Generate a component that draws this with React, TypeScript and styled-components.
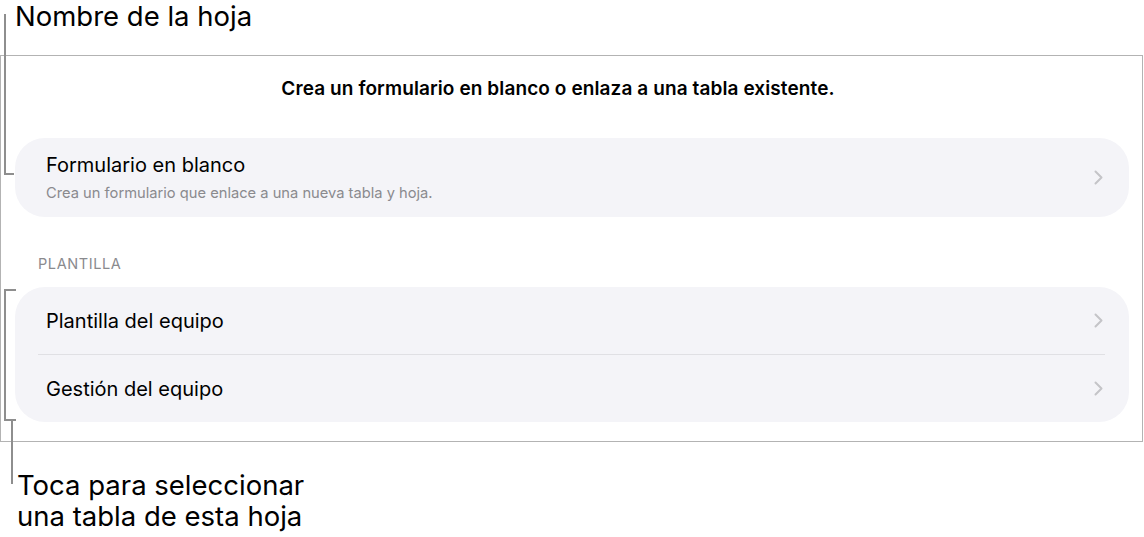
import React from 'react'
import styled, { createGlobalStyle } from 'styled-components'

const GlobalStyle = createGlobalStyle`
  html, body {
    margin: 0;
    padding: 0;
    background: #ffffff;
  }
  body {
    font-family: Inter, 'Noto Sans', sans-serif;
    color: #000000;
    -webkit-font-smoothing: antialiased;
  }
`

const colors = {
  line: '#8e8e8e',
  frame: '#b3b3b3',
  card: '#f4f4f8',
  divider: '#e0e0e4',
  muted: '#8a8a8e',
  chevron: '#c4c4c8',
}

const Page = styled.div`
  position: relative;
  width: 1144px;
  height: 537px;
  overflow: hidden;
`

const Callout = styled.div<{ top?: boolean }>`
  font-size: 27.5px;
  line-height: ${p => (p.top ? '32px' : '31px')};
  padding-left: ${p => (p.top ? '15px' : '17px')};
  height: ${p => (p.top ? '55px' : 'auto')};
  padding-top: ${p => (p.top ? '0' : '28px')};
  box-sizing: border-box;
`

const Frame = styled.div`
  width: 1143px;
  height: 387px;
  box-sizing: border-box;
  border: 1px solid ${colors.frame};
  padding: 0 13px 0 14px;
  display: flex;
  flex-direction: column;
`

const Heading = styled.h1`
  margin: 0;
  height: 82px;
  box-sizing: border-box;
  display: flex;
  align-items: center;
  justify-content: center;
  padding: 0 28px 18px 0;
  font-size: 19px;
  font-weight: 600;
  letter-spacing: 0.1px;
`

const Card = styled.div`
  background: ${colors.card};
  border-radius: 30px;
  display: flex;
  flex-direction: column;
`

const Row = styled.div<{ tall?: boolean }>`
  height: ${p => (p.tall ? '79px' : '67px')};
  display: flex;
  align-items: center;
  padding: 0 26px 0 31px;
  box-sizing: border-box;
`

const RowText = styled.div`
  flex: 1;
  display: flex;
  flex-direction: column;
  gap: 7px;
`

const Title = styled.div`
  font-size: 20px;
  line-height: 24px;
`

const Subtitle = styled.div`
  font-size: 14.7px;
  line-height: 18px;
  color: ${colors.muted};
`

const Divider = styled.div`
  height: 1px;
  background: ${colors.divider};
  margin: 0 24px 0 23px;
`

const SectionLabel = styled.div`
  font-size: 14.5px;
  line-height: 18px;
  color: ${colors.muted};
  text-transform: uppercase;
  padding: 38px 0 0 23px;
  height: 70px;
  box-sizing: border-box;
  letter-spacing: 0.6px;
`

const Bracket = styled.div`
  position: absolute;
  border: 2px solid ${colors.line};
  box-sizing: border-box;
`

const Chevron = () => (
  <svg width="9" height="15" viewBox="0 0 9 15" fill="none">
    <path d="M1.5 1.5 L7.5 7.5 L1.5 13.5" stroke={colors.chevron} strokeWidth="2" strokeLinecap="round" strokeLinejoin="round" />
  </svg>
)

const ListRow = ({ title, subtitle }: { title: string, subtitle?: string }) => (
  <Row tall={!!subtitle}>
    <RowText>
      <Title>{title}</Title>
      {subtitle && <Subtitle>{subtitle}</Subtitle>}
    </RowText>
    <Chevron />
  </Row>
)

export default function App() {
  return (
    <Page>
      <GlobalStyle />
      <Callout top>Nombre de la hoja</Callout>
      <Frame>
        <Heading>Crea un formulario en blanco o enlaza a una tabla existente.</Heading>
        <Card>
          <ListRow title="Formulario en blanco" subtitle="Crea un formulario que enlace a una nueva tabla y hoja." />
        </Card>
        <SectionLabel>Plantilla</SectionLabel>
        <Card>
          <ListRow title="Plantilla del equipo" />
          <Divider />
          <ListRow title="Gestión del equipo" />
        </Card>
      </Frame>
      <Callout>
        Toca para seleccionar
        <br />
        una tabla de esta hoja
      </Callout>

      {/* callout lines */}
      <Bracket style={{ left: 4, top: 14, width: 10, height: 161, borderTop: 'none', borderRight: 'none' }} />
      <Bracket style={{ left: 4, top: 289, width: 12, height: 132, borderRight: 'none' }} />
      <Bracket style={{ left: 11, top: 420, width: 2, height: 64, borderRight: 'none', borderTop: 'none', borderBottom: 'none' }} />
    </Page>
  )
}
